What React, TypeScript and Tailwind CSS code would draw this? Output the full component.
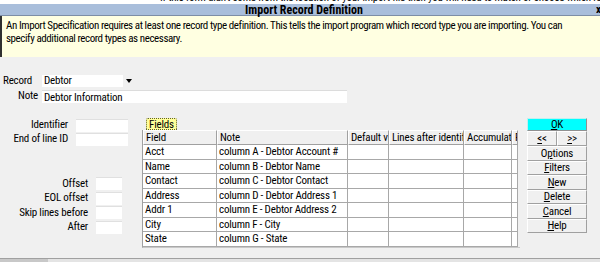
import React from "react";

const columns = [
  { label: "Field", w: "w-[74px]" },
  { label: "Note", w: "w-[131px]" },
  { label: "Default value", w: "w-[41px]" },
  { label: "Lines after identifier", w: "w-[75px]" },
  { label: "Accumulate", w: "w-[48px]" },
  { label: "Format", w: "w-[6px]" },
];

const rows = [
  ["Acct", "column A - Debtor Account #"],
  ["Name", "column B - Debtor Name"],
  ["Contact", "column C - Debtor Contact"],
  ["Address", "column D - Debtor Address 1"],
  ["Addr 1", "column E - Debtor Address 2"],
  ["City", "column F - City"],
  ["State", "column G - State"],
];

function Btn({ pre, u, post }: { pre?: string; u: string; post?: string }) {
  return (
    <div className="h-[14.5px] flex items-center justify-center border border-t-white border-l-white border-b-[#a0a0a0] border-r-[#a0a0a0] bg-[#f0f0f0] leading-none">
      {pre}
      <span className="underline">{u}</span>
      {post}
    </div>
  );
}

function Box({ w }: { w: string }) {
  return <div className={`${w} h-[13px] bg-white border-t border-t-[#e0e0e0]`} />;
}

export default function App() {
  return (
    <div className="w-[600px] h-[262px] overflow-hidden bg-[#f0f0f0] text-[11px] tracking-[-0.2px] text-black font-['Roboto_Condensed','Liberation_Sans',sans-serif] flex flex-col">
      <div className="h-[4px] bg-white overflow-hidden shrink-0">
        <div className="-mt-[9px] pl-[160px] whitespace-nowrap leading-[13px]">
          If this form didn't come from the location of your import file then you will need to match or choose which record to use it with
        </div>
      </div>
      <div className="h-[12px] bg-[#a9bedb] relative flex items-center justify-center shrink-0 border-b border-[#7d8ea6]">
        <span className="font-bold text-[12px] tracking-normal leading-none pl-[8px]">Import Record Definition</span>
        <span className="absolute right-0 top-0 h-[11px] w-[4px] overflow-hidden font-bold leading-[11px]">x</span>
      </div>
      <div className="h-[41px] bg-[#ffffe1] border-l-2 border-[#303030] pl-[4px] pt-[3px] leading-[13px] tracking-[-0.42px] shrink-0 whitespace-nowrap">
        An Import Specification requires at least one record type definition. This tells the import program which record type you are importing. You can
        <br />
        specify additional record types as necessary.
      </div>

      <div className="mt-[18px] flex items-center h-[12px]">
        <div className="w-[42px] pl-[3px]">Record</div>
        <div className="w-[81px] h-[12px] bg-white pl-[2px] leading-[12px]">Debtor</div>
        <div className="w-[12px] h-[12px] flex items-center justify-center">
          <div className="w-0 h-0 border-l-[3.5px] border-r-[3.5px] border-t-[4px] border-l-transparent border-r-transparent border-t-black" />
        </div>
      </div>
      <div className="mt-[3px] flex items-center h-[13px]">
        <div className="w-[42px] text-right pr-[4px]">Note</div>
        <div className="w-[305px] h-[13px] bg-white pl-[2px] leading-[13px] border-t border-t-[#dcdcdc]">Debtor Information</div>
      </div>

      <div className="mt-[15px] flex">
        {/* left fields */}
        <div className="w-[142px] shrink-0">
          <div className="flex items-center h-[13px] mt-[1px]">
            <div className="w-[68px] text-right">Identifier</div>
            <div className="ml-[8px]"><Box w="w-[52px]" /></div>
          </div>
          <div className="flex items-center h-[13px] mt-[1px]">
            <div className="w-[68px] text-right">End of line ID</div>
            <div className="ml-[8px]"><Box w="w-[52px]" /></div>
          </div>
          <div className="mt-[31px] flex flex-col gap-[1px]">
            {["Offset", "EOL offset", "Skip lines before", "After"].map((l) => (
              <div key={l} className="flex items-center h-[13.5px]">
                <div className="w-[88px] text-right">{l}</div>
                <div className="ml-[8px]"><Box w="w-[26px]" /></div>
              </div>
            ))}
          </div>
        </div>

        {/* table */}
        <div className="w-[378px] shrink-0">
          <div className="ml-[4px] w-[31px] h-[12px] bg-[#ffff99] border border-dotted border-[#606030] rounded-t-[2px] flex items-center justify-center leading-none">
            Fields
          </div>
          <div className="border-l border-[#a0a0a0] bg-[#f0f0f0] h-[118px] w-[378px] border-b border-b-[#c8c8c8]">
            <div className="flex h-[15px]">
              {columns.map((c) => (
                <div
                  key={c.label}
                  className={`${c.w} shrink-0 overflow-hidden whitespace-nowrap pl-[2px] leading-[13px] bg-[#f0f0f0] border-t border-l border-t-white border-l-white border-r border-b border-r-[#a0a0a0] border-b-[#a0a0a0]`}
                >
                  {c.label}
                </div>
              ))}
            </div>
            {rows.map((r) => (
              <div key={r[0]} className="flex h-[14.5px]">
                {columns.map((c, i) => (
                  <div
                    key={c.label}
                    className={`${c.w} shrink-0 overflow-hidden whitespace-nowrap pl-[2px] leading-[13px] bg-white border-r border-b border-[#a8a8a8]`}
                  >
                    {i < 2 ? r[i] : ""}
                  </div>
                ))}
              </div>
            ))}
          </div>
        </div>

        {/* buttons */}
        <div className="ml-[7px] w-[60px] shrink-0 flex flex-col">
          <div className="h-[13px] bg-[#00ffff] flex items-center justify-center leading-none border border-[#c0f0f0] border-r-[#909090] border-b-[#909090]">
            <span className="underline">O</span>K
          </div>
          <div className="flex h-[15px]">
            <div className="w-1/2 flex items-center justify-center bg-[#f0f0f0] border border-t-white border-l-white border-b-[#a0a0a0] border-r-[#a0a0a0] leading-none">
              <span className="underline">&lt;</span>&lt;
            </div>
            <div className="w-1/2 flex items-center justify-center bg-[#f0f0f0] border border-t-white border-l-white border-b-[#a0a0a0] border-r-[#a0a0a0] leading-none">
              <span className="underline">&gt;</span>&gt;
            </div>
          </div>
          <Btn pre="O" u="p" post="tions" />
          <Btn u="F" post="ilters" />
          <Btn u="N" post="ew" />
          <Btn u="D" post="elete" />
          <Btn u="C" post="ancel" />
          <Btn u="H" post="elp" />
        </div>
      </div>

      <div className="mt-[10px] border-t border-[#a0a0a0] flex h-[4px]">
        <div className="w-[48px] bg-[#c8c8c8]" />
        <div className="flex-1 bg-[#e4e4e4]" />
      </div>
    </div>
  );
}
